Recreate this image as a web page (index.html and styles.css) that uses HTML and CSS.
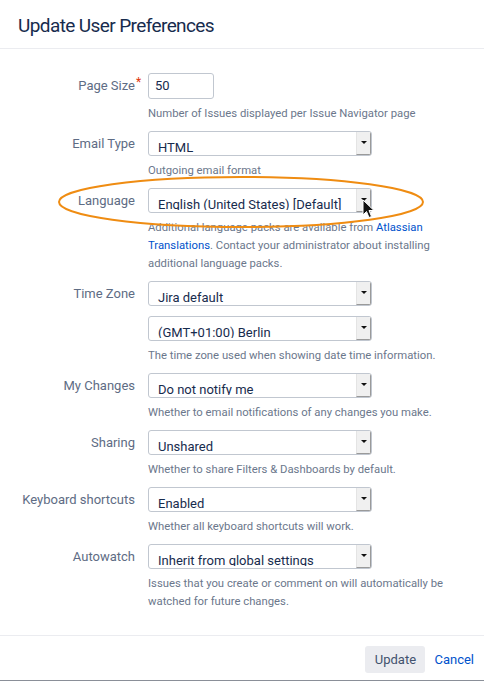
FILE: index.html
```html
<!DOCTYPE html>
<html lang="en">
  <head>
    <meta charset="UTF-8" />
    <meta name="viewport" content="width=device-width, initial-scale=1.0" />
    <title>Update User Preferences</title>
    <link rel="stylesheet" href="styles.css">
  </head>
  <body>
    <div class="dialog">
      <header class="dialog-header">
        <h2>Update User Preferences</h2>
      </header>

      <form class="dialog-body">
        <div class="field-group">
          <label class="field-label">Page Size<span class="req">*</span></label>
          <div class="field-control">
            <div class="text-input">50</div>
            <div class="description">Number of Issues displayed per Issue Navigator page</div>
          </div>
        </div>

        <div class="field-group">
          <label class="field-label">Email Type</label>
          <div class="field-control">
            <div class="select"><span class="value">HTML</span><span class="arrow"></span></div>
            <div class="description">Outgoing email format</div>
          </div>
        </div>

        <div class="field-group">
          <label class="field-label">Language</label>
          <div class="field-control">
            <div class="select"><span class="value">English (United States) [Default]</span><span class="arrow"></span></div>
            <div class="description">Additional language packs are available from <a href="#">Atlassian Translations</a>. Contact your administrator about installing additional language packs.</div>
          </div>
        </div>

        <div class="field-group">
          <label class="field-label">Time Zone</label>
          <div class="field-control">
            <div class="select"><span class="value">Jira default</span><span class="arrow"></span></div>
            <div class="select second"><span class="value">(GMT+01:00) Berlin</span><span class="arrow"></span></div>
            <div class="description">The time zone used when showing date time information.</div>
          </div>
        </div>

        <div class="field-group">
          <label class="field-label">My Changes</label>
          <div class="field-control">
            <div class="select"><span class="value">Do not notify me</span><span class="arrow"></span></div>
            <div class="description">Whether to email notifications of any changes you make.</div>
          </div>
        </div>

        <div class="field-group">
          <label class="field-label">Sharing</label>
          <div class="field-control">
            <div class="select"><span class="value">Unshared</span><span class="arrow"></span></div>
            <div class="description">Whether to share Filters &amp; Dashboards by default.</div>
          </div>
        </div>

        <div class="field-group">
          <label class="field-label">Keyboard shortcuts</label>
          <div class="field-control">
            <div class="select"><span class="value">Enabled</span><span class="arrow"></span></div>
            <div class="description">Whether all keyboard shortcuts will work.</div>
          </div>
        </div>

        <div class="field-group">
          <label class="field-label">Autowatch</label>
          <div class="field-control">
            <div class="select"><span class="value">Inherit from global settings</span><span class="arrow"></span></div>
            <div class="description">Issues that you create or comment on will automatically be watched for future changes.</div>
          </div>
        </div>
      </form>

      <footer class="dialog-footer">
        <button class="btn">Update</button>
        <a href="#" class="cancel">Cancel</a>
      </footer>
    </div>

    <!-- annotation drawn over the screenshot -->
    <svg class="highlight" width="370" height="56" viewBox="0 0 370 56">
      <ellipse cx="185" cy="28" rx="182" ry="25" fill="none" stroke="#ef8c12" stroke-width="2" />
    </svg>
    <svg class="cursor" width="14" height="20" viewBox="0 0 14 20">
      <path d="M1 1 L1 16 L4.5 12.5 L7 18.5 L9.5 17.5 L7 11.5 L12 11.5 Z" fill="#111" stroke="#fff" stroke-width="1" stroke-linejoin="round" />
    </svg>
  </body>
</html>
```

FILE: styles.css
```css
html,
body {
  margin: 0;
  padding: 0;
  background: #fff;
}
body {
  font-family: Roboto, "Liberation Sans", sans-serif;
  color: #172b4d;
  position: relative;
}
.dialog {
  width: 484px;
  height: 680px;
  border-bottom: 1px solid #8a8f98;
  display: flex;
  flex-direction: column;
  background: #fff;
}
.dialog-header {
  height: 48px;
  border-bottom: 1px solid #ebecf0;
  display: flex;
  align-items: center;
  padding: 0 18px;
}
.dialog-header h2 {
  margin: 2px 0 0;
  font-size: 19px;
  font-weight: 400;
  letter-spacing: -0.6px;
  color: #172b4d;
}
.dialog-body {
  flex: 1;
  padding: 24px 0 0;
  display: flex;
  flex-direction: column;
  gap: 8px;
}
.field-group {
  display: grid;
  grid-template-columns: 135px 1fr;
  column-gap: 13px;
}
.field-label {
  text-align: right;
  font-size: 13px;
  line-height: 25px;
  color: #5e6c84;
  position: relative;
}
.req {
  color: #de350b;
  position: absolute;
  font-size: 12px;
  line-height: 1;
  top: 3px;
  left: 136px;
}
.field-control {
  display: flex;
  flex-direction: column;
}
.text-input {
  height: 24px;
  border: 1px solid #c1c7d0;
  border-radius: 3px;
  font-size: 13px;
  line-height: 24px;
  padding-left: 6px;
  width: 58px;
}
.select {
  width: 222px;
  height: 23px;
  border: 1px solid #c1c7d0;
  border-radius: 3px;
  display: flex;
  align-items: flex-start;
  overflow: hidden;
}
.select.second {
  margin-top: 10px;
}
.select .value {
  flex: 1;
  height: 12px;
  padding: 9px 0 0 9px;
  font-size: 13px;
  line-height: 13px;
  color: #172b4d;
  white-space: nowrap;
  overflow: hidden;
}
.select .arrow {
  width: 13px;
  height: 22px;
  background: #f0f0f0;
  border-left: 1px solid #e4e4e4;
  border-right: 1px solid #9a9a9a;
  border-bottom: 1px solid #9a9a9a;
  position: relative;
}
.select .arrow:after {
  content: "";
  position: absolute;
  left: 4px;
  top: 9px;
  border-left: 3px solid transparent;
  border-right: 3px solid transparent;
  border-top: 3px solid #111;
}
.description {
  margin-top: 6px;
  font-size: 11.3px;
  line-height: 18px;
  color: #6b778c;
  padding-right: 28px;
}
.description a {
  color: #0052cc;
  text-decoration: none;
}
.dialog-footer {
  height: 45px;
  border-top: 1px solid #ebecf0;
  display: flex;
  align-items: center;
  justify-content: flex-end;
  gap: 9px;
  padding: 3px 10px 0 0;
  box-sizing: border-box;
}
.btn {
  height: 27px;
  width: 60px;
  border: none;
  border-radius: 3px;
  background: #ebecf0;
  color: #42526e;
  font-family: Roboto, "Liberation Sans", sans-serif;
  font-size: 13px;
}
.cancel {
  color: #0052cc;
  font-size: 13px;
  text-decoration: none;
}
.highlight {
  position: absolute;
  left: 56px;
  top: 174px;
}
.cursor {
  position: absolute;
  left: 362px;
  top: 199px;
}
```
